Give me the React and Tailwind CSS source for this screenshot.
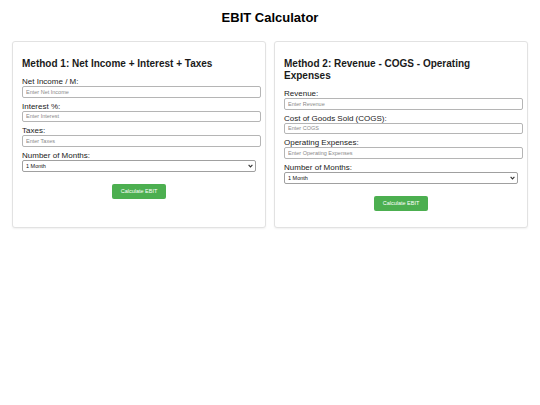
import React from "react";

function Field({ label, placeholder }) {
  return (
    <div className="mb-[5px]">
      <label className="block text-[8px] leading-[8px] text-[#222]">{label}</label>
      <input
        type="text"
        placeholder={placeholder}
        className="block h-[11.5px] w-[calc(100%+5px)] rounded-[2px] border border-[#b5b5b5] bg-white px-[3px] text-[5.5px] leading-[9px] text-[#222] outline-none placeholder:text-[#8a8a8a]"
      />
    </div>
  );
}

function MonthSelect() {
  return (
    <div className="mb-[5px]">
      <label className="block text-[8px] leading-[8px] text-[#222]">Number of Months:</label>
      <div className="relative h-[12px] w-full">
        <select className="block h-[12px] w-full appearance-none rounded-[2px] border border-[#a0a0a0] bg-white px-[3px] text-[5.5px] leading-[10px] text-[#111] outline-none">
          <option>1 Month</option>
          <option>3 Months</option>
          <option>6 Months</option>
          <option>12 Months</option>
        </select>
        <svg
          className="pointer-events-none absolute right-[3px] top-[4px]"
          width="5"
          height="4"
          viewBox="0 0 5 4"
        >
          <path d="M0.6 0.8 L2.5 2.9 L4.4 0.8" fill="none" stroke="#333" strokeWidth="1.1" />
        </svg>
      </div>
    </div>
  );
}

function Card({ title, fields }) {
  return (
    <div className="flex flex-1 flex-col rounded-[3px] border border-[#e2e2e2] bg-white px-[9px] pb-[16px] pt-[9px] shadow-[0_1px_2px_rgba(0,0,0,0.06)]">
      <h2 className="mb-[8px] mt-[7px] text-[10px] font-bold leading-[12px] text-[#1a1a1a]">{title}</h2>
      {fields.map((f) => (
        <Field key={f[0]} label={f[0]} placeholder={f[1]} />
      ))}
      <MonthSelect />
      <div className="mt-[7.5px] flex justify-center">
        <button className="h-[15px] rounded-[2px] bg-[#4caf50] px-[9px] text-[5.5px] leading-[15px] text-white">
          Calculate EBIT
        </button>
      </div>
    </div>
  );
}

export default function App() {
  return (
    <div
      className="min-h-screen bg-white px-[12px]"
      style={{ fontFamily: '"Liberation Sans", Arial, sans-serif' }}
    >
      <h1 className="pt-[10px] text-center text-[13px] font-bold leading-[15px] text-black">EBIT Calculator</h1>
      <div className="mt-[16px] flex items-stretch gap-[8px]">
        <Card
          title="Method 1: Net Income + Interest + Taxes"
          fields={[
            ["Net Income / M:", "Enter Net Income"],
            ["Interest %:", "Enter Interest"],
            ["Taxes:", "Enter Taxes"],
          ]}
        />
        <Card
          title="Method 2: Revenue - COGS - Operating Expenses"
          fields={[
            ["Revenue:", "Enter Revenue"],
            ["Cost of Goods Sold (COGS):", "Enter COGS"],
            ["Operating Expenses:", "Enter Operating Expenses"],
          ]}
        />
      </div>
    </div>
  );
}
